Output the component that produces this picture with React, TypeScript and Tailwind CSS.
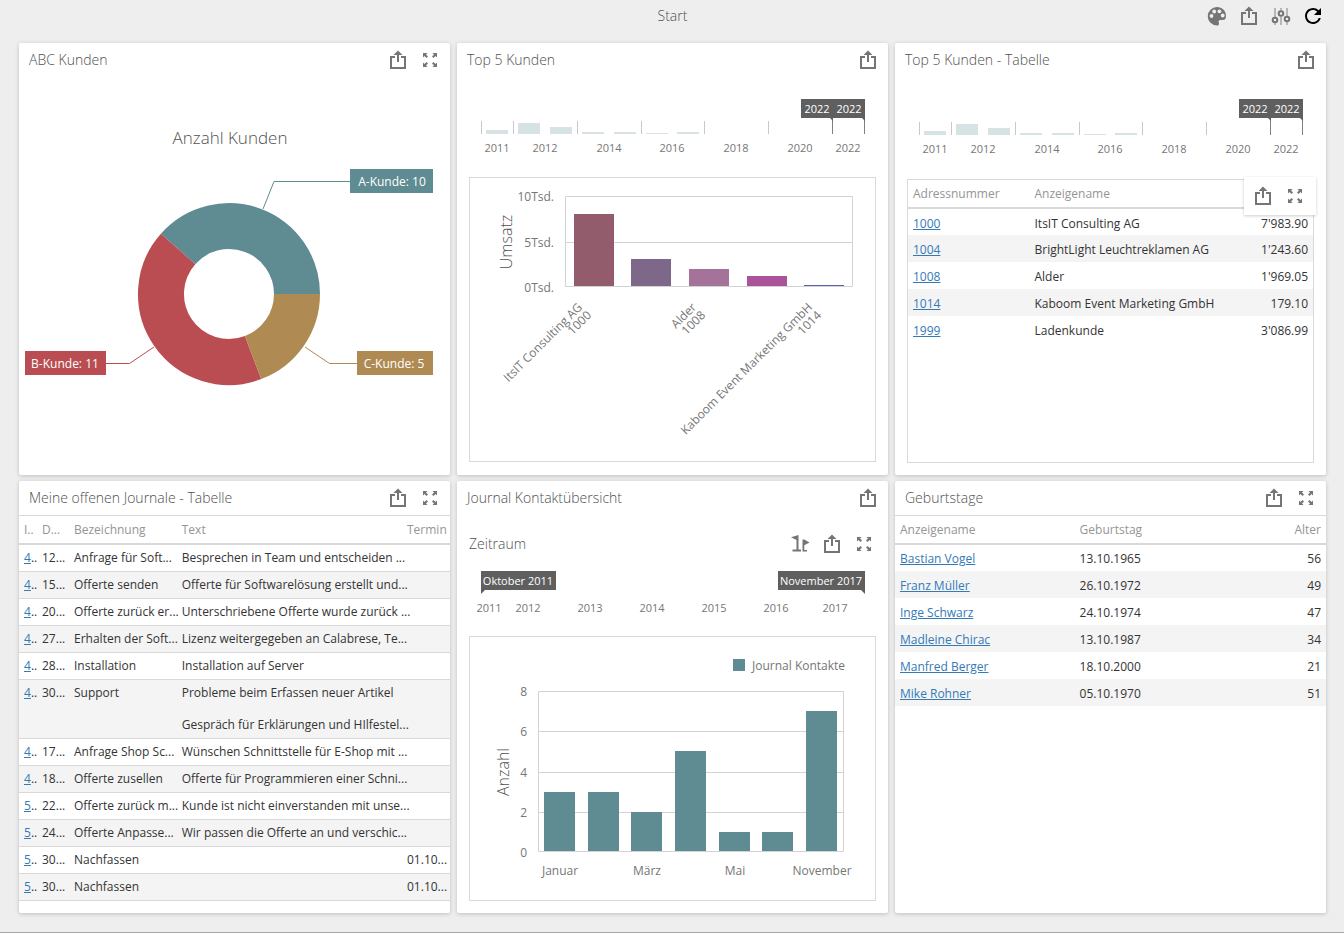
import type { ReactNode } from "react";
import { MdRefresh } from "react-icons/md";

/* ---------- Data ---------- */

const journals = [
  { id: "4", date: "12...", name: "Anfrage für Soft...", text: ["Besprechen in Team und entscheiden ..."], due: "" },
  { id: "4", date: "15...", name: "Offerte senden", text: ["Offerte für Softwarelösung erstellt und..."], due: "" },
  { id: "4", date: "20...", name: "Offerte zurück er...", text: ["Unterschriebene Offerte wurde zurück ..."], due: "" },
  { id: "4", date: "27...", name: "Erhalten der Soft...", text: ["Lizenz weitergegeben an Calabrese, Te..."], due: "" },
  { id: "4", date: "28...", name: "Installation", text: ["Installation auf Server"], due: "" },
  { id: "4", date: "30...", name: "Support", text: ["Probleme beim Erfassen neuer Artikel", "Gespräch für Erklärungen und HIlfestel..."], due: "" },
  { id: "4", date: "17...", name: "Anfrage Shop Sc...", text: ["Wünschen Schnittstelle für E-Shop mit ..."], due: "" },
  { id: "4", date: "18...", name: "Offerte zusellen", text: ["Offerte für Programmieren einer Schni..."], due: "" },
  { id: "5", date: "22...", name: "Offerte zurück m...", text: ["Kunde ist nicht einverstanden mit unse..."], due: "" },
  { id: "5", date: "24...", name: "Offerte Anpasse...", text: ["Wir passen die Offerte an und verschic..."], due: "" },
  { id: "5", date: "30...", name: "Nachfassen", text: [], due: "01.10..." },
  { id: "5", date: "30...", name: "Nachfassen", text: [], due: "01.10..." },
];

const customers = [
  { id: "1000", name: "ItsIT Consulting AG", total: "7'983.90" },
  { id: "1004", name: "BrightLight Leuchtreklamen AG", total: "1'243.60" },
  { id: "1008", name: "Alder", total: "1'969.05" },
  { id: "1014", name: "Kaboom Event Marketing GmbH", total: "179.10" },
  { id: "1999", name: "Ladenkunde", total: "3'086.99" },
];

const birthdays = [
  { name: "Bastian Vogel", date: "13.10.1965", age: 56 },
  { name: "Franz Müller", date: "26.10.1972", age: 49 },
  { name: "Inge Schwarz", date: "24.10.1974", age: 47 },
  { name: "Madleine Chirac", date: "13.10.1987", age: 34 },
  { name: "Manfred Berger", date: "18.10.2000", age: 21 },
  { name: "Mike Rohner", date: "05.10.1970", age: 51 },
];

/* ---------- Icons ---------- */

const ShareIcon = () => (
  <svg viewBox="0 0 24 24" className="size-6" aria-hidden="true">
    <path d="M9 9H5v11h14V9h-4" fill="none" stroke="currentColor" strokeWidth="2" />
    <path d="M12 2.5 16.5 7H13v7h-2V7H7.5z" fill="currentColor" />
  </svg>
);

const ExpandIcon = () => (
  <svg viewBox="0 0 24 24" className="size-6" aria-hidden="true">
    <path
      d="M5 5h4.500L8 6.500l2 2L8.500 10l-2-2L5 9.500zM19 5v4.500L17.500 8l-2 2L14 8.500l2-2L14.500 5zM5 19v-4.500L6.500 16l2-2L10 15.500l-2 2L9.500 19zM19 19h-4.500l1.500-1.500-2-2 1.500-1.500 2 2 1.500-1.500z"
      fill="currentColor"
    />
  </svg>
);

const PaletteIcon = () => (
  <svg viewBox="0 0 24 24" className="size-6" aria-hidden="true">
    <path
      d="M12 3a9 9 0 0 0 0 18.500c1.300 0 2-.8 2-1.800 0-1.200-.8-1.700-.3-2.700.4-.8 1.100-.9 2.300-.9h2c2.100 0 3-1.700 3-4.300C21 6.800 17 3 12 3z"
      fill="currentColor"
    />
    <g fill="#eee">
      <circle cx="6.500" cy="12" r="1.900" />
      <circle cx="9.200" cy="7.500" r="1.900" />
      <circle cx="14.400" cy="7.300" r="1.900" />
      <circle cx="17.700" cy="11.500" r="1.900" />
    </g>
  </svg>
);

const SlidersIcon = () => (
  <svg viewBox="0 0 24 24" className="size-6" fill="none" stroke="currentColor" aria-hidden="true">
    <path d="M6 4v9M6 19v2M12 4v2.500M12 12.500V21M18 4v8M18 18v3" strokeWidth="1.500" opacity="0.6" />
    <circle cx="6" cy="16" r="2.300" strokeWidth="2" />
    <circle cx="12" cy="9.500" r="2.300" strokeWidth="2" />
    <circle cx="18" cy="15" r="2.300" strokeWidth="2" />
  </svg>
);

const FlagsIcon = () => (
  <svg viewBox="0 0 24 24" className="size-6" fill="currentColor" aria-hidden="true">
    <path d="M10.500 3v14.500H13v2H4.500v-2h4V8L3 5.200z" />
    <path d="M14.500 7.500h1.800L21.500 10.500l-5.200 2.800V18H19v1.500h-4.500z" />
  </svg>
);

const IconButton = ({ label, children }: { label: string; children: ReactNode }) => (
  <button type="button" aria-label={label} className="size-6 cursor-pointer">
    {children}
  </button>
);

const ShareButton = () => (
  <IconButton label="Exportieren">
    <ShareIcon />
  </IconButton>
);

const ExpandButton = () => (
  <IconButton label="Maximieren">
    <ExpandIcon />
  </IconButton>
);

/* ---------- Card ---------- */

type CardProps = { title: string; expand?: boolean; children: ReactNode };

const Card = ({ title, expand, children }: CardProps) => (
  <section className="flex min-w-0 flex-col rounded-xs bg-white shadow-[0_1px_4px_rgba(0,0,0,0.2)]">
    <header className="flex h-[34px] shrink-0 items-center justify-between pr-2 pl-[10px]">
      <h2 className="text-sm font-light text-[#505050]">{title}</h2>
      <div className="flex gap-2 text-[#757575]">
        <ShareButton />
        {expand && <ExpandButton />}
      </div>
    </header>
    {children}
  </section>
);

/* ---------- Charts ---------- */

const CustomerDonut = () => (
  <svg viewBox="0 0 431 397" className="w-full" role="img" aria-label="Anzahl Kunden">
    <text x="211" y="66" textAnchor="middle" className="fill-[#505050] text-[17px] font-light">
      Anzahl Kunden
    </text>
    <g fill="none" strokeWidth="46">
      <path d="M278 216A68 68 0 0 0 159.100 170.900" stroke="#5f8b93" />
      <path d="M159.100 170.900A68 68 0 0 0 234.100 279.600" stroke="#ba4d51" />
      <path d="M234.100 279.600A68 68 0 0 0 278 216" stroke="#af8a53" />
    </g>
    <g fill="none">
      <path d="M244 131 255 103.500H332" stroke="#5f8b93" />
      <path d="M87 285.500H110.500L135 269" stroke="#ba4d51" />
      <path d="M286 269 310.500 285.500H338" stroke="#af8a53" />
    </g>
    <rect x="331" y="91" width="83" height="24" fill="#5f8b93" />
    <rect x="6" y="273" width="81" height="24" fill="#ba4d51" />
    <rect x="338" y="273" width="76" height="24" fill="#af8a53" />
    <g textAnchor="middle" className="fill-white text-xs font-medium">
      <text x="373" y="108">A-Kunde: 10</text>
      <text x="46" y="290">B-Kunde: 11</text>
      <text x="375" y="290">C-Kunde: 5</text>
    </g>
  </svg>
);

const rangeBars = [
  { x: 17, h: 4 },
  { x: 49, h: 11 },
  { x: 81, h: 7 },
  { x: 113, h: 2 },
  { x: 145, h: 2 },
  { x: 177, h: 1 },
  { x: 208, h: 2 },
];

const rangeYears = [
  { x: 28, year: 2011 },
  { x: 76, year: 2012 },
  { x: 140, year: 2014 },
  { x: 203, year: 2016 },
  { x: 267, year: 2018 },
  { x: 331, year: 2020 },
  { x: 379, year: 2022 },
];

const SalesRange = ({ base }: { base: number }) => (
  <svg viewBox={`0 0 407 ${base + 43}`} className="w-full" role="img" aria-label="Zeitraum 2022 bis 2022">
    {[12, 44, 108, 172, 235, 299].map((x) => (
      <rect key={x} x={x} y={base - 13} width="1" height="13" fill="#c8c8c8" />
    ))}
    {rangeBars.map((bar) => (
      <rect key={bar.x} x={bar.x} y={base - bar.h} width="22" height={bar.h} fill="#d7e2e4" />
    ))}
    <path d={`M363.500 40V${base}M395.500 40V${base}`} stroke="#808080" />
    <path d="M332 21h64v22l-3-3h-29v3l-3-3h-29z" fill="#5f5f5f" />
    <g textAnchor="middle" className="fill-white text-[11px] font-medium">
      <text x="348" y="35">2022</text>
      <text x="380" y="35">2022</text>
    </g>
    <g textAnchor="middle" className="fill-[#767676] text-[11px]">
      {rangeYears.map(({ x, year }) => (
        <text key={year} x={x} y={base + 18}>{year}</text>
      ))}
    </g>
  </svg>
);

const salesBars = [
  { x: 104, y: 36, color: "#935c6d" },
  { x: 161, y: 81, color: "#7e6889" },
  { x: 219, y: 91, color: "#a5739a" },
  { x: 277, y: 98, color: "#ab5399" },
  { x: 334, y: 107, color: "#5a62a8" },
];

const salesLabels = [
  { x: 113, name: "ItsIT Consulting AG", id: "1000" },
  { x: 227, name: "Alder", id: "1008" },
  { x: 343, name: "Kaboom Event Marketing GmbH", id: "1014" },
];

const SalesChart = () => (
  <svg viewBox="0 0 405 283" className="w-full" role="img" aria-label="Umsatz">
    <path d="M95.500 18.500h287v90h-287zM95.500 64.500h287" fill="none" stroke="#d3d3d3" />
    {salesBars.map((bar) => (
      <rect key={bar.x} x={bar.x} y={bar.y} width="40" height={108 - bar.y} fill={bar.color} />
    ))}
    <g textAnchor="end" className="fill-[#767676] text-xs">
      <text x="84" y="23">10Tsd.</text>
      <text x="84" y="69">5Tsd.</text>
      <text x="84" y="114">0Tsd.</text>
    </g>
    <text transform="translate(42 64) rotate(-90)" textAnchor="middle" className="fill-[#505050] text-base font-light">
      Umsatz
    </text>
    {salesLabels.map((label) => (
      <g key={label.id} textAnchor="end" className="fill-[#767676] text-xs">
        <text transform={`translate(${label.x} 130) rotate(-45)`}>{label.name}</text>
        <text transform={`translate(${label.x + 9} 138) rotate(-45)`}>{label.id}</text>
      </g>
    ))}
  </svg>
);

const ContactRange = () => (
  <svg viewBox="0 0 407 80" className="w-full" role="img" aria-label="Oktober 2011 bis November 2017">
    <path d="M12 15h75v19H16l-4 4zM309 15h87v23l-4-4h-83z" fill="#5f5f5f" />
    <g textAnchor="middle" className="fill-white text-[11px] font-medium">
      <text x="49" y="29">Oktober 2011</text>
      <text x="352" y="29">November 2017</text>
    </g>
    <g textAnchor="middle" className="fill-[#767676] text-[11px]">
      {[20, 59, 121, 183, 245, 307, 366].map((x, i) => (
        <text key={x} x={x} y="56">{2011 + i}</text>
      ))}
    </g>
  </svg>
);

const contactBars = [
  { x: 74, y: 155 },
  { x: 118, y: 155 },
  { x: 161, y: 175 },
  { x: 205, y: 114 },
  { x: 249, y: 195 },
  { x: 292, y: 195 },
  { x: 336, y: 74 },
];

const ContactChart = () => (
  <svg viewBox="0 0 405 263" className="w-full" role="img" aria-label="Journal Kontakte">
    <rect x="263" y="22" width="12" height="12" fill="#5f8b93" />
    <text x="282" y="33" className="fill-[#767676] text-xs">Journal Kontakte</text>
    <path d="M68.500 54.500h305v160h-305zM68.500 94.500h305M68.500 135.500h305M68.500 175.500h305" fill="none" stroke="#d3d3d3" />
    {contactBars.map((bar) => (
      <rect key={bar.x} x={bar.x} y={bar.y} width="31" height={214 - bar.y} fill="#5f8b93" />
    ))}
    <g textAnchor="end" className="fill-[#767676] text-xs">
      <text x="57" y="59">8</text>
      <text x="57" y="99">6</text>
      <text x="57" y="140">4</text>
      <text x="57" y="180">2</text>
      <text x="57" y="220">0</text>
    </g>
    <g textAnchor="middle" className="fill-[#767676] text-xs">
      <text x="90" y="238">Januar</text>
      <text x="177" y="238">März</text>
      <text x="265" y="238">Mai</text>
      <text x="352" y="238">November</text>
    </g>
    <text transform="translate(39 135) rotate(-90)" textAnchor="middle" className="fill-[#505050] text-base font-light">
      Anzahl
    </text>
  </svg>
);

/* ---------- Tables ---------- */

const TableLink = ({ children }: { children: ReactNode }) => (
  <a href="#" className="text-[#337ab7] underline">{children}</a>
);

const JournalTable = () => (
  <table className="w-full table-fixed border-t border-[#d9d9d9] text-left whitespace-nowrap leading-4">
    <colgroup>
      <col className="w-[18px]" />
      <col className="w-8" />
      <col className="w-1/4" />
      <col />
      <col className="w-12" />
    </colgroup>
    <thead className="border-b-2 border-[#d9d9d9] text-[#959595]">
      <tr className="h-7 *:pt-px *:pl-[5px] *:font-normal">
        <th>I..</th>
        <th>D...</th>
        <th>Bezeichnung</th>
        <th>Text</th>
        <th className="pr-[7px] text-right">Termin</th>
      </tr>
    </thead>
    <tbody>
      {journals.map((row, i) => (
        <tr key={i} className="border-b border-[#d9d9d9] align-top even:bg-[#f4f4f4] *:pt-[5px] *:pb-[5px] *:pl-[5px]">
          <td><TableLink>{row.id}</TableLink>..</td>
          <td>{row.date}</td>
          <td>{row.name}</td>
          <td>
            <div className="flex flex-col gap-4">
              {row.text.map((line) => (
                <p key={line}>{line}</p>
              ))}
            </div>
          </td>
          <td>{row.due}</td>
        </tr>
      ))}
    </tbody>
  </table>
);

const CustomerTable = () => (
  <table className="w-full table-fixed text-left whitespace-nowrap">
    <thead className="border-b-2 border-[#d9d9d9] text-[#959595]">
      <tr className="h-7 *:px-[5px] *:pt-px *:font-normal">
        <th className="w-[30%]">Adressnummer</th>
        <th className="w-1/2">Anzeigename</th>
        <th />
      </tr>
    </thead>
    <tbody>
      {customers.map((row) => (
        <tr key={row.id} className="h-[27px] even:bg-[#f4f4f4] *:px-[5px] *:pt-[3px]">
          <td><TableLink>{row.id}</TableLink></td>
          <td>{row.name}</td>
          <td className="text-right">{row.total}</td>
        </tr>
      ))}
    </tbody>
  </table>
);

const BirthdayTable = () => (
  <table className="w-full table-fixed border-t border-[#d9d9d9] text-left whitespace-nowrap">
    <thead className="border-b-2 border-[#d9d9d9] text-[#959595]">
      <tr className="h-7 *:px-[5px] *:pt-px *:font-normal">
        <th className="w-5/12">Anzeigename</th>
        <th className="w-5/12">Geburtstag</th>
        <th className="text-right">Alter</th>
      </tr>
    </thead>
    <tbody>
      {birthdays.map((row) => (
        <tr key={row.name} className="h-[27px] even:bg-[#f4f4f4] *:px-[5px] *:pt-[3px]">
          <td><TableLink>{row.name}</TableLink></td>
          <td>{row.date}</td>
          <td className="text-right">{row.age}</td>
        </tr>
      ))}
    </tbody>
  </table>
);

/* ---------- Page ---------- */

export default function App() {
  return (
    <div className="flex min-h-screen flex-col bg-white pb-px font-['Open_Sans','Noto_Sans',sans-serif] text-xs text-[#333]">
      <div className="flex flex-1 flex-col border-b border-[#a6a6a6] bg-[#eee] pr-[18px] pb-[19px] pl-[19px]">
        {/* Top bar */}
        <header className="mb-[11px] grid h-8 grid-cols-3 items-center">
          <h1 className="col-start-2 text-center text-sm font-light text-[#505050]">Start</h1>
          <div className="flex justify-end gap-2 pr-px text-[#757575]">
            <IconButton label="Farbschema"><PaletteIcon /></IconButton>
            <ShareButton />
            <IconButton label="Parameter"><SlidersIcon /></IconButton>
            <IconButton label="Aktualisieren"><MdRefresh className="size-6 text-black" /></IconButton>
          </div>
        </header>

        <main className="grid flex-1 auto-rows-fr grid-cols-3 gap-x-[7px] gap-y-[6px]">
          <Card title="ABC Kunden" expand>
            <div className="flex-1 pt-px">
              <CustomerDonut />
            </div>
          </Card>

          <Card title="Top 5 Kunden">
            <div className="flex flex-1 flex-col px-3 pt-px pb-[13px]">
              <SalesRange base={56} />
              <div className="flex-1 border border-[#d9d9d9]">
                <SalesChart />
              </div>
            </div>
          </Card>

          <Card title="Top 5 Kunden - Tabelle">
            <div className="flex flex-1 flex-col px-3 pt-px pb-3">
              <SalesRange base={57} />
              <div className="relative mt-px flex-1 border border-[#d9d9d9]">
                <CustomerTable />
                {/* Hover toolbar of the table */}
                <div className="absolute -top-[3px] -right-[3px] flex gap-2 bg-white py-[7px] pr-[9px] pl-[7px] text-[#757575] shadow-[0_1px_3px_rgba(0,0,0,0.2)]">
                  <ShareButton />
                  <ExpandButton />
                </div>
              </div>
            </div>
          </Card>

          <Card title="Meine offenen Journale - Tabelle" expand>
            <JournalTable />
          </Card>

          <Card title="Journal Kontaktübersicht">
            <div className="flex flex-1 flex-col px-3 pt-px pb-3">
              <div className="mt-4 flex h-6 items-center justify-between">
                <h3 className="text-sm font-light text-[#505050]">Zeitraum</h3>
                <div className="flex gap-2 text-[#757575]">
                  <IconButton label="Auswahl zurücksetzen"><FlagsIcon /></IconButton>
                  <ShareButton />
                  <ExpandButton />
                </div>
              </div>
              <ContactRange />
              <div className="flex-1 border border-[#d9d9d9]">
                <ContactChart />
              </div>
            </div>
          </Card>

          <Card title="Geburtstage" expand>
            <BirthdayTable />
          </Card>
        </main>
      </div>
    </div>
  );
}
